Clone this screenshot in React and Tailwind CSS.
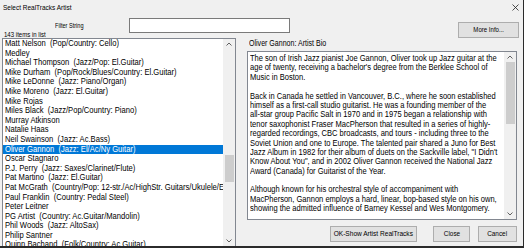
import React from 'react';

const artists = [
  'Matt Nelson  (Pop/Country: Cello)',
  'Medley',
  'Michael Thompson  (Jazz/Pop: El.Guitar)',
  'Mike Durham  (Pop/Rock/Blues/Country: El.Guitar)',
  'Mike LeDonne  (Jazz: Piano/Organ)',
  'Mike Moreno  (Jazz: El.Guitar)',
  'Mike Rojas',
  'Miles Black  (Jazz/Pop/Country: Piano)',
  'Murray Atkinson',
  'Natalie Haas',
  'Neil Swainson  (Jazz: Ac.Bass)',
  'Oliver Gannon  (Jazz: El/Ac/Ny Guitar)',
  'Oscar Stagnaro',
  'P.J. Perry  (Jazz: Saxes/Clarinet/Flute)',
  'Pat Martino  (Jazz: El.Guitar)',
  'Pat McGrath  (Country/Pop: 12-str./Ac/HighStr. Guitars/Ukulele/El.Guitar)',
  'Paul Franklin  (Country: Pedal Steel)',
  'Peter Leitner',
  'PG Artist  (Country: Ac.Guitar/Mandolin)',
  'Phil Woods  (Jazz: AltoSax)',
  'Philip Santner',
  'Quinn Bachand  (Folk/Country: Ac.Guitar)',
];

const bio = [
  'The son of Irish Jazz pianist Joe Gannon, Oliver took up Jazz guitar at the',
  "age of twenty, receiving a bachelor's degree from the Berklee School of",
  'Music in Boston.',
  '',
  'Back in Canada he settled in Vancouver, B.C., where he soon established',
  'himself as a first-call studio guitarist. He was a founding member of the',
  'all-star group Pacific Salt in 1970 and in 1975 began a relationship with',
  'tenor saxophonist Fraser MacPherson that resulted in a series of highly-',
  'regarded recordings, CBC broadcasts, and tours - including three to the',
  'Soviet Union and one to Europe. The talented pair shared a Juno for Best',
  'Jazz Album in 1982 for their album of duets on the Sackville label, "I Didn\'t',
  'Know About You", and in 2002 Oliver Gannon received the National Jazz',
  'Award (Canada) for Guitarist of the Year.',
  '',
  'Although known for his orchestral style of accompaniment with',
  'MacPherson, Gannon employs a hard, linear, bop-based style on his own,',
  'showing the admitted influence of Barney Kessel and Wes Montgomery.',
];

// the dialog font is narrow, so the text is squeezed sideways
const Narrow = ({ children, center }) => (
  <span className={`inline-block whitespace-pre scale-x-[0.82] ${center ? 'origin-center' : 'origin-left'}`}>
    {children}
  </span>
);

const Chevron = ({ up }) => (
  <svg width="6" height="4" viewBox="0 0 6 4" className="block">
    <polyline
      points={up ? '0.5,3.5 3,1 5.5,3.5' : '0.5,0.5 3,3 5.5,0.5'}
      fill="none"
      stroke="#606060"
      strokeWidth="1"
    />
  </svg>
);

const ScrollBar = ({ thumbTop, thumbHeight }) => (
  <div className="w-[12px] h-full bg-[#f0f0f0] flex flex-col items-center shrink-0">
    <div className="h-[10px] flex items-center justify-center">
      <Chevron up />
    </div>
    <div className="flex-1 w-full px-[1.5px]">
      <div className="w-full bg-[#cdcdcd]" style={{ marginTop: thumbTop, height: thumbHeight }} />
    </div>
    <div className="h-[10px] flex items-center justify-center">
      <Chevron />
    </div>
  </div>
);

const Button = ({ children, className = '' }) => (
  <button
    className={`h-[16px] bg-[#e1e1e1] border border-[#adadad] leading-none text-black flex items-center justify-center whitespace-nowrap ${className}`}
  >
    <Narrow center>{children}</Narrow>
  </button>
);

export default function App() {
  return (
    <div
      className="w-[524px] h-[248px] bg-[#f0f0f0] border-r border-b-2 border-[#2b2b2b] flex flex-col overflow-hidden text-black"
      style={{ fontFamily: '"Liberation Sans", Arial, sans-serif' }}
    >
      {/* title bar */}
      <div className="h-[15px] flex items-center justify-between pl-[3px] pr-[4px] shrink-0">
        <span className="text-[7.9px] leading-none">
          <Narrow>Select RealTracks Artist</Narrow>
        </span>
        <svg width="7" height="7" viewBox="0 0 7 7">
          <path d="M0.5 0.5 L6.5 6.5 M6.5 0.5 L0.5 6.5" stroke="#222" strokeWidth="0.8" />
        </svg>
      </div>

      {/* filter row */}
      <div className="h-[23px] flex items-start shrink-0">
        <div className="w-[129px] pl-[4px] pt-[5.5px] leading-[9px]">
          <div className="pl-[51px] text-[6.8px]">
            <Narrow>Filter String</Narrow>
          </div>
          <div className="text-[7.4px]">
            <Narrow>143 items in list</Narrow>
          </div>
        </div>
        <div className="mt-[3px] w-[161px] h-[15px] bg-white border border-[#7a7a7a]" />
        <Button className="ml-auto mr-[4px] mt-[7px] w-[61px] text-[7.4px]">More Info...</Button>
      </div>

      {/* main */}
      <div className="flex flex-1 min-h-0">
        <div className="ml-[2px] w-[234px] h-full bg-white border border-b-0 border-[#828790] flex">
          <div className="flex-1 min-w-0 overflow-hidden">
            {artists.map((a, i) => (
              <div
                key={a}
                className={`h-[9.6px] leading-[9.6px] pl-[2px] text-[9.3px] ${
                  i === 11 ? 'bg-[#0078d7] text-white' : ''
                }`}
              >
                <Narrow>{a}</Narrow>
              </div>
            ))}
          </div>
          <ScrollBar thumbTop={106} thumbHeight={27} />
        </div>

        <div className="ml-[11px] w-[270px] flex flex-col">
          <div className="h-[13px] leading-[10px] pl-[2px] text-[8.6px]">
            <Narrow>Oliver Gannon: Artist Bio</Narrow>
          </div>
          <div className="h-[169px] bg-white border border-[#828790] flex">
            <div className="flex-1 min-w-0 pl-[2px] pt-[2px] text-[9.2px] leading-[9.4px] overflow-hidden">
              {bio.map((l, i) => (
                <div key={i} className="h-[9.4px]">
                  <Narrow>{l}</Narrow>
                </div>
              ))}
            </div>
            <ScrollBar thumbTop={0} thumbHeight={62} />
          </div>
          <div className="mt-[6px] flex">
            <Button className="ml-[83px] w-[87px] border-[#0078d7] text-[8px]">OK-Show Artist RealTracks</Button>
            <Button className="ml-[16px] w-[37px] text-[7.8px]">Close</Button>
            <Button className="ml-[8px] w-[39px] text-[7.8px]">Cancel</Button>
          </div>
        </div>
      </div>
    </div>
  );
}
